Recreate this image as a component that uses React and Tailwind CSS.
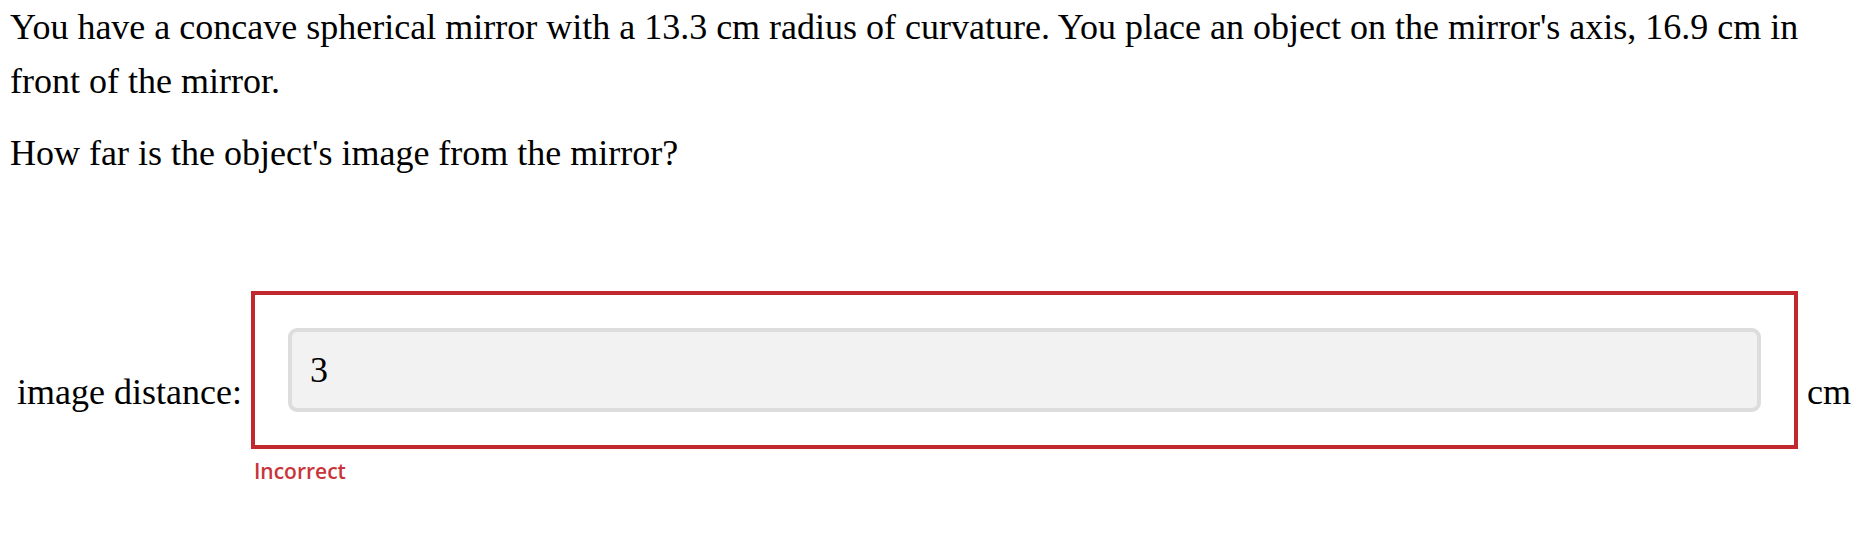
const serif = { fontFamily: '"Liberation Serif", "Times New Roman", serif' };

export default function App() {
  return (
    <div
      className="w-[1868px] h-[556px] bg-white text-black pl-[10px] pr-[17px]"
      style={serif}
    >
      <p className="text-[36px] leading-[54px] m-0">
        You have a concave spherical mirror with a 13.3 cm radius of curvature.
        You place an object on the mirror's axis, 16.9 cm in front of the
        mirror.
      </p>
      <p className="text-[36px] leading-[54px] mt-[18px]">
        How far is the object's image from the mirror?
      </p>

      <div className="flex items-start mt-[111px]">
        <label className="text-[36px] leading-[44px] mt-[79px] pl-[7px] pr-[9px] whitespace-nowrap">
          image distance:
        </label>
        <div className="flex-1 flex flex-col">
          <div className="border-4 border-[#c1292e] p-[33px]">
            <div className="h-[84px] rounded-[9px] border-4 border-[#dddddd] bg-[#f2f2f2] pl-[18px] flex items-center text-[36px]">
              3
            </div>
          </div>
          <span
            className="mt-[8px] pl-[3px] text-[21px] leading-[28px] font-semibold text-[#c9343a]"
            style={{ fontFamily: '"Open Sans", "Noto Sans", sans-serif' }}
          >
            Incorrect
          </span>
        </div>
        <span className="text-[36px] leading-[44px] mt-[79px] pl-[9px]">cm</span>
      </div>
    </div>
  );
}
